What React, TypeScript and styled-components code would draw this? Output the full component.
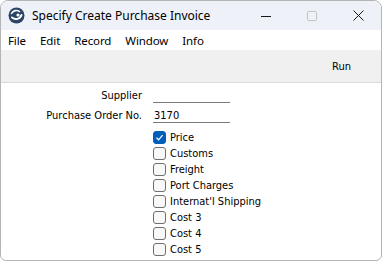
import React from "react";
import styled, { createGlobalStyle } from "styled-components";

const Global = createGlobalStyle`
  html, body { margin: 0; padding: 0; background: #ffffff; }
  body { font-family: "Noto Sans", "Open Sans", sans-serif; }
  * { box-sizing: border-box; }
`;

const Window = styled.div`
  width: 382px;
  height: 261px;
  border: 1px solid #b4b4b4;
  border-radius: 8px 8px 6px 6px;
  overflow: hidden;
  display: flex;
  flex-direction: column;
  background: #ffffff;
  font-size: 12px;
  color: #000;
`;

const TitleBar = styled.div`
  height: 29px;
  flex: none;
  display: flex;
  align-items: center;
  background: #eef2f8;
  padding-left: 7px;
`;

const TitleText = styled.span`
  margin-left: 7px;
  font-size: 12px;
  flex: 1;
`;

const WinButton = styled.div`
  width: 46px;
  height: 29px;
  display: flex;
  align-items: center;
  justify-content: center;
`;

const MenuBar = styled.div`
  height: 20px;
  flex: none;
  display: flex;
  align-items: center;
  background: #ffffff;
  font-size: 11.5px;
`;

const MenuItem = styled.span`
  padding: 0 7px;
  letter-spacing: -0.1px;
`;

const Toolbar = styled.div`
  height: 33px;
  flex: none;
  display: flex;
  align-items: center;
  justify-content: flex-end;
  background: #f0f0f0;
  border-bottom: 1px solid #dadada;
  padding-right: 30px;
  font-family: "DejaVu Sans Condensed", "DejaVu Sans", sans-serif;
  font-size: 11px;
`;

const Content = styled.div`
  flex: 1;
  display: grid;
  grid-template-columns: 141px auto;
  column-gap: 11px;
  align-content: start;
  padding-top: 6px;
  font-family: "DejaVu Sans Condensed", "DejaVu Sans", sans-serif;
  font-size: 11px;
`;

const Label = styled.div`
  text-align: right;
  height: 20px;
  line-height: 14px;
`;

const Field = styled.div`
  width: 77px;
  height: 14px;
  line-height: 13px;
  border-bottom: 1px solid #7a7a7a;
  padding-left: 1px;
`;

const CheckList = styled.div`
  display: flex;
  flex-direction: column;
`;

const CheckRow = styled.label`
  height: 16px;
  display: flex;
  align-items: center;
  gap: 4px;
`;

const Box = styled.span<{ $checked?: boolean }>`
  width: 13px;
  height: 13px;
  border-radius: 3px;
  border: 1px solid ${(p) => (p.$checked ? "#005fb8" : "#6e6e6e")};
  background: ${(p) => (p.$checked ? "#005fb8" : "#f8f8f8")};
  display: flex;
  align-items: center;
  justify-content: center;
  flex: none;
`;

const items: [string, boolean][] = [
  ["Price", true],
  ["Customs", false],
  ["Freight", false],
  ["Port Charges", false],
  ["Internat'l Shipping", false],
  ["Cost 3", false],
  ["Cost 4", false],
  ["Cost 5", false],
];

export default function App() {
  return (
    <>
      <Global />
      <Window>
        <TitleBar>
          <svg width="17" height="17" viewBox="0 0 17 17">
            <circle cx="8.5" cy="8.5" r="8" fill="#2c4566" />
            <path d="M3.5 6.5 C5 3.5 9 2.5 11.5 4.5" stroke="#ffffff" strokeWidth="1.6" fill="none" strokeLinecap="round" />
            <path d="M4 10.5 C7 13 12 12.5 13.5 8" stroke="#ffffff" strokeWidth="2" fill="none" strokeLinecap="round" />
            <circle cx="10" cy="8" r="1.6" fill="#ffffff" />
          </svg>
          <TitleText>Specify Create Purchase Invoice</TitleText>
          <WinButton>
            <svg width="10" height="10" viewBox="0 0 10 10">
              <line x1="0" y1="5.5" x2="10" y2="5.5" stroke="#1a1a1a" strokeWidth="1" />
            </svg>
          </WinButton>
          <WinButton>
            <svg width="10" height="10" viewBox="0 0 10 10">
              <rect x="0.5" y="0.5" width="9" height="9" rx="1" stroke="#c4c4c4" strokeWidth="1" fill="none" />
            </svg>
          </WinButton>
          <WinButton>
            <svg width="11" height="11" viewBox="0 0 11 11">
              <path d="M0.5 0.5 L10.5 10.5 M10.5 0.5 L0.5 10.5" stroke="#1a1a1a" strokeWidth="1" />
            </svg>
          </WinButton>
        </TitleBar>
        <MenuBar>
          <MenuItem>File</MenuItem>
          <MenuItem>Edit</MenuItem>
          <MenuItem>Record</MenuItem>
          <MenuItem>Window</MenuItem>
          <MenuItem>Info</MenuItem>
        </MenuBar>
        <Toolbar>Run</Toolbar>
        <Content>
          <Label>Supplier</Label>
          <div>
            <Field />
          </div>
          <Label>Purchase Order No.</Label>
          <div>
            <Field>3170</Field>
          </div>
          <div />
          <CheckList>
            {items.map(([name, checked]) => (
              <CheckRow key={name}>
                <Box $checked={checked}>
                  {checked && (
                    <svg width="9" height="9" viewBox="0 0 9 9">
                      <path d="M1.5 4.8 L3.6 6.8 L7.6 2.2" stroke="#ffffff" strokeWidth="1.2" fill="none" />
                    </svg>
                  )}
                </Box>
                {name}
              </CheckRow>
            ))}
          </CheckList>
        </Content>
      </Window>
    </>
  );
}
